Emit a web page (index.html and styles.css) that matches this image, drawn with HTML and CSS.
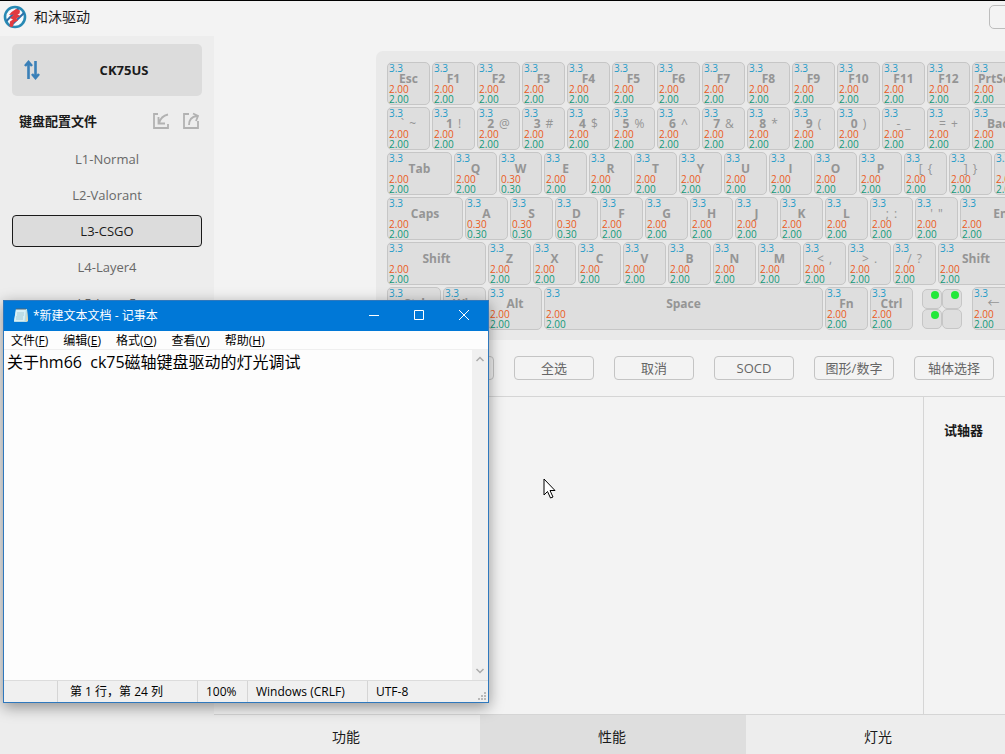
FILE: index.html
```
<!DOCTYPE html>
<html lang="zh-CN">
<head>
<meta charset="utf-8">
<title>和沐驱动</title>
<link rel="stylesheet" href="styles.css">
</head>
<body>
<div class="app">
  <header class="titlebar">
    <svg class="logo" viewBox="0 0 24 24" aria-hidden="true">
      <circle cx="12" cy="12" r="10" fill="#f6fafc" stroke="#2789b4" stroke-width="2.6"/>
      <path d="M3.500 16 15.500 3.500M8 20.500 21 8" stroke="#2a6fa8" stroke-width="2"/>
      <path d="M8.500 7l4.500-3 4 1.500-.500 3-2 1 3 1.500-4 2.500 1.500 2-4 2-1.500 4.500-3-.500.500-5 3-2-3-1.500 4-3.500-5 .500z" fill="#e23b3f"/>
    </svg>
    <span class="app-name">和沐驱动</span>
    <button class="window-button" aria-label="窗口"></button>
  </header>
  <div class="body">
    <aside class="sidebar">
      <button class="device">
        <svg class="device-icon" viewBox="0 0 16 20" aria-hidden="true"><path d="M4.500 19V3M1 6l3.500-4L8 6M11.500 1v16M8 14l3.500 4 3.500-4" fill="none" stroke="#3a80b8" stroke-width="2.600"/></svg>
        <span>CK75US</span>
      </button>
      <div class="profiles-head">
        <h2>键盘配置文件</h2>
        <button class="icon-button" aria-label="导入"><svg viewBox="0 0 18 18"><path d="M6 2H2v14h14v-4M16 2.500Q9 4 7 11M6.500 5v6.500H13" /></svg></button>
        <button class="icon-button" aria-label="导出"><svg viewBox="0 0 18 18"><path d="M7 2H2v14h14V9M7 13Q7 5 15 4M11 1.500l5 2.500-2 5" /></svg></button>
      </div>
      <nav class="profiles">
        <button>L1-Normal</button>
        <button>L2-Valorant</button>
        <button class="selected">L3-CSGO</button>
        <button>L4-Layer4</button>
        <button>L5-Layer5</button>
      </nav>
    </aside>
    <main class="main">
      <section class="board-area"><div class="keyboard" id="keyboard"></div></section>
      <div class="toolbar">
        <button>反选</button><button>全选</button><button>取消</button><button>SOCD</button><button>图形/数字</button><button>轴体选择</button>
      </div>
      <div class="panels">
        <section class="settings"></section>
        <section class="tester"><h2>试轴器</h2></section>
      </div>
      <nav class="tabs">
        <button>功能</button><button class="selected">性能</button><button>灯光</button>
      </nav>
    </main>
  </div>
</div>

<section class="notepad" aria-label="记事本">
  <header class="np-title">
    <svg class="np-icon" viewBox="0 0 16 16" aria-hidden="true"><path d="M3 2h11l1 12-2 1H1z" fill="#b5dce8"/><path d="M3 2h10L11.500 14H1z" fill="#d8eff5"/><path d="M14 3l1 11-2 1z" fill="#e9d6a8"/><path d="M4 6h7M4 8h7M3 10h7M3 12h7" stroke="#8dbdcc" stroke-width=".7"/><path d="M4 1v2M6 1v2M8 1v2M10 1v2M12 1v2" stroke="#4d6572"/></svg>
    <span class="np-name">*新建文本文档 - 记事本</span>
    <button aria-label="最小化"><svg viewBox="0 0 12 12"><path d="M1 6.500h10"/></svg></button>
    <button aria-label="最大化"><svg viewBox="0 0 12 12"><path d="M1.500 1.500h9v9h-9z"/></svg></button>
    <button aria-label="关闭"><svg viewBox="0 0 12 12"><path d="M1 1l10 10M11 1 1 11"/></svg></button>
  </header>
  <nav class="np-menu">
    <button>文件(<u>F</u>)</button><button>编辑(<u>E</u>)</button><button>格式(<u>O</u>)</button><button>查看(<u>V</u>)</button><button>帮助(<u>H</u>)</button>
  </nav>
  <div class="np-body">
    <textarea aria-label="文本" spellcheck="false">关于hm66  ck75磁轴键盘驱动的灯光调试</textarea>
    <div class="np-scroll">
      <svg viewBox="0 0 10 10"><path d="M1.500 7 5 3.500 8.500 7"/></svg>
      <svg viewBox="0 0 10 10"><path d="M1.500 3 5 6.500 8.500 3"/></svg>
    </div>
  </div>
  <footer class="np-status">
    <span class="st-blank"></span><span class="st-pos">第 1 行，第 24 列</span><span class="st-zoom">100%</span><span class="st-eol">Windows (CRLF)</span><span class="st-enc">UTF-8</span>
    <svg class="grip" viewBox="0 0 9 9" aria-hidden="true"><path d="M6 0h2v2H6zM3 3h2v2H3zM6 3h2v2H6zM0 6h2v2H0zM3 6h2v2H3zM6 6h2v2H6z" fill="#b9b9b9"/></svg>
  </footer>
</section>

<svg class="cursor" viewBox="0 0 13 22" aria-hidden="true"><path d="M1 1v16l3.500-3.500L7.500 20l2.500-1-3-6.500h5z" fill="#fff" stroke="#000"/></svg>
<script src="keyboard.js"></script>
</body>
</html>
```

FILE: styles.css
```
* { box-sizing: border-box; }
body {
  margin: 0;
  font-family: "Open Sans", "Noto Sans CJK SC", sans-serif;
  font-size: 13px;
  color: #1a1a1a;
  background: #f3f3f3;
  overflow: hidden;
}
button { font: inherit; color: inherit; border: 0; padding: 0; background: none; }
h2 { margin: 0; font-size: 13px; line-height: 20px; font-weight: 700; }

.app { display: flex; flex-direction: column; height: 100vh; border-top: 1px solid #000; }
.titlebar { display: flex; align-items: center; height: 35px; flex: none; padding: 0 0 4px 3px; gap: 7px; overflow: hidden; }
.logo { width: 24px; height: 24px; flex: none; }
.app-name { font-size: 14px; line-height: 20px; flex: 1; }
.window-button { width: 32px; height: 24px; flex: none; margin-right: -16px; border: 1px solid #bdbdbd; border-radius: 5px; }

.body { display: flex; flex: 1; min-height: 0; }
.sidebar { width: 214px; flex: none; padding: 8px 12px; background: #ededed; }
.device { display: flex; align-items: center; width: 100%; height: 52px; padding: 0 12px; border-radius: 5px; background: #dcdcdc; font-weight: 700; }
.device-icon { width: 16px; height: 20px; }
.device span { flex: 1; padding-left: 18px; }
.profiles-head { display: flex; align-items: center; gap: 12px; height: 47px; padding: 3px 2px 0 7px; }
.profiles-head h2 { flex: 1; }
.icon-button { width: 18px; height: 18px; }
.icon-button svg { display: block; fill: none; stroke: #b2b2b2; stroke-width: 1.8; }
.profiles { display: flex; flex-direction: column; gap: 4px; }
.profiles button { height: 32px; color: #686868; border: 1px solid transparent; border-radius: 4px; }
.profiles .selected { color: #1a1a1a; background: #dcdcdc; border-color: #1a1a1a; }

.main { display: flex; flex-direction: column; flex: 1; min-width: 0; overflow: hidden; }
.board-area { padding: 15px 0 0 162px; flex: none; }
.keyboard { display: flex; flex-direction: column; gap: 2px; width: max-content; padding: 11px 11px 10px; border-radius: 7px; background: #e9e9e9; }
.row { display: flex; gap: 2px; }
.key { display: flex; flex-direction: column; width: 43px; height: 43px; padding: 0 1px; border: 1px solid #c6c6c6; border-radius: 5px; background: #dedede; font-size: 10px; line-height: 10px; text-align: left; white-space: pre; }
.key b, .key .symbol { align-self: center; font-size: 12px; line-height: 11px; color: #959595; }
.key .symbol { font-weight: 400; }
.key .alt { font-weight: 400; margin-left: 2px; }
.w54 { width: 54px; }
.w65 { width: 65px; }
.w76 { width: 76px; }
.w93 { width: 93px; }
.w99 { width: 99px; }
.space { width: 279px; }
.travel { color: #1f9bc8; }
.press { color: #ea5a1c; }
.release { color: #139878; }
.leds { display: grid; grid-template-columns: 20px 20px; grid-template-rows: 20px 20px; padding: 2px 8px 1px 7px; }
.led { border: 1px solid #c6c6c6; border-radius: 5px; background: #dedede; padding: 1px; display: flex; justify-content: flex-end; }
.led.on::after { content: ""; width: 8px; height: 8px; margin-right: 1px; border-radius: 50%; background: #22e83a; }

.toolbar { display: flex; align-items: center; gap: 20px; height: 57px; flex: none; padding: 0 0 1px 200px; border-bottom: 1px solid #d5d5d5; }
.toolbar button { width: 80px; height: 24px; flex: none; border: 1px solid #c4c4c4; border-radius: 4px; color: #666; }
.panels { display: flex; flex: 1; min-height: 0; }
.settings { flex: 1; }
.tester { width: 82px; padding: 23px 20px; border-left: 1px solid #d5d5d5; }
.tester h2 { white-space: nowrap; }
.tabs { display: flex; flex: none; height: 40px; border-top: 1px solid #d5d5d5; background: #ededed; }
.tabs button { flex: 1 0 266px; font-size: 14px; padding: 2px 2px 0 0; }
.tabs .selected { background: #dedede; }

.notepad { position: absolute; left: 3px; top: 300px; width: 486px; height: 403px; display: flex; flex-direction: column; border: 1px solid #2f78bd; background: #fdfdfd; font-size: 12px; color: #000; box-shadow: 0 4px 14px rgba(0, 0, 0, .4); }
.np-title { display: flex; align-items: center; height: 30px; flex: none; padding: 0 2px 2px 9px; background: #0078d7; color: #fff; }
.np-icon { width: 16px; height: 16px; margin-right: 4px; }
.np-name { flex: 1; }
.np-title button { width: 45px; height: 28px; display: grid; place-items: center; }
.np-title button svg { width: 12px; height: 12px; fill: none; stroke: #fff; }
.np-menu { display: flex; gap: 15px; height: 19px; flex: none; padding-left: 7px; line-height: 20px; border-bottom: 1px solid #efefef; }
.np-body { display: flex; flex: 1; min-height: 0; }
.np-body textarea { flex: 1; border: 0; outline: 0; resize: none; padding: 0 3px; background: #fdfdfd; color: #000; font: 16px/24px "Open Sans", "Noto Sans CJK SC", sans-serif; }
.np-scroll { width: 16px; display: flex; flex-direction: column; justify-content: space-between; align-items: center; padding: 4px 0; background: #f0f0f0; }
.np-scroll svg { width: 10px; height: 10px; fill: none; stroke: #ababab; stroke-width: 1.5; }
.np-status { display: flex; height: 22px; flex: none; line-height: 22px; background: #f0f0f0; border-top: 1px solid #dcdcdc; white-space: nowrap; }
.np-status span { border-right: 1px solid #d5d5d5; }
.st-blank { width: 54px; }
.st-pos { width: 140px; padding-left: 12px; }
.st-zoom { width: 50px; padding-left: 8px; }
.st-eol { width: 120px; padding-left: 8px; }
.np-status .st-enc { flex: 1; padding-left: 8px; border-right: 0; }
.grip { width: 9px; height: 9px; align-self: flex-end; margin: 0 1px 1px 0; }

.cursor { position: absolute; left: 543px; top: 478px; width: 13px; height: 22px; }
```

FILE: keyboard.js
```
// Each key: label, optional shifted symbol, optional width class, optional actuation value.
const k = (label, alt = "", size = "", value = "2.00") => ({ label, alt, size, value });
const rows = [
  ["Esc", "F1", "F2", "F3", "F4", "F5", "F6", "F7", "F8", "F9", "F10", "F11", "F12", "PrtSc"].map(n => k(n)),
  [k("`", "~"), k("1", "!"), k("2", "@"), k("3", "#"), k("4", "$"), k("5", "%"), k("6", "^"), k("7", "&"), k("8", "*"), k("9", "("), k("0", ")"), k("-", "_"), k("=", "+"), k("Backspace", "", "w93")],
  [k("Tab", "", "w65"), k("Q"), k("W", "", "", "0.30"), k("E"), k("R"), k("T"), k("Y"), k("U"), k("I"), k("O"), k("P"), k("[", "{"), k("]", "}"), k("\\", "|", "w65")],
  [k("Caps", "", "w76"), k("A", "", "", "0.30"), k("S", "", "", "0.30"), k("D", "", "", "0.30"), k("F"), k("G"), k("H"), k("J"), k("K"), k("L"), k(";", ":"), k("'", "\""), k("Enter", "", "w99")],
  [k("Shift", "", "w99"), k("Z"), k("X"), k("C"), k("V"), k("B"), k("N"), k("M"), k("<", ","), k(">", "."), k("/", "?"), k("Shift", "", "w76")],
  [k("Ctrl", "", "w54"), k("Win"), k("Alt", "", "w54"), k("Space", "", "space"), k("Fn"), k("Ctrl"), "leds", k("←")]
];

const node = (tag, cls, text = "") => {
  const el = document.createElement(tag);
  el.className = cls;
  el.textContent = text;
  return el;
};

const board = document.getElementById("keyboard");
for (const keys of rows) {
  const row = node("div", "row");
  for (const key of keys) {
    if (key === "leds") {
      const leds = node("div", "leds");
      for (const on of [true, true, true, false]) leds.append(node("span", on ? "led on" : "led"));
      row.append(leds);
      continue;
    }
    const el = node("button", "key " + key.size);
    const isWord = /^\w/.test(key.label);
    const label = node(isWord ? "b" : "span", isWord ? "legend" : "symbol", key.label);
    if (key.alt) label.append(node("span", "alt", " " + key.alt));
    el.append(node("span", "travel", "3.3"), label, node("span", "press", key.value), node("span", "release", key.value));
    row.append(el);
  }
  board.append(row);
}
```
